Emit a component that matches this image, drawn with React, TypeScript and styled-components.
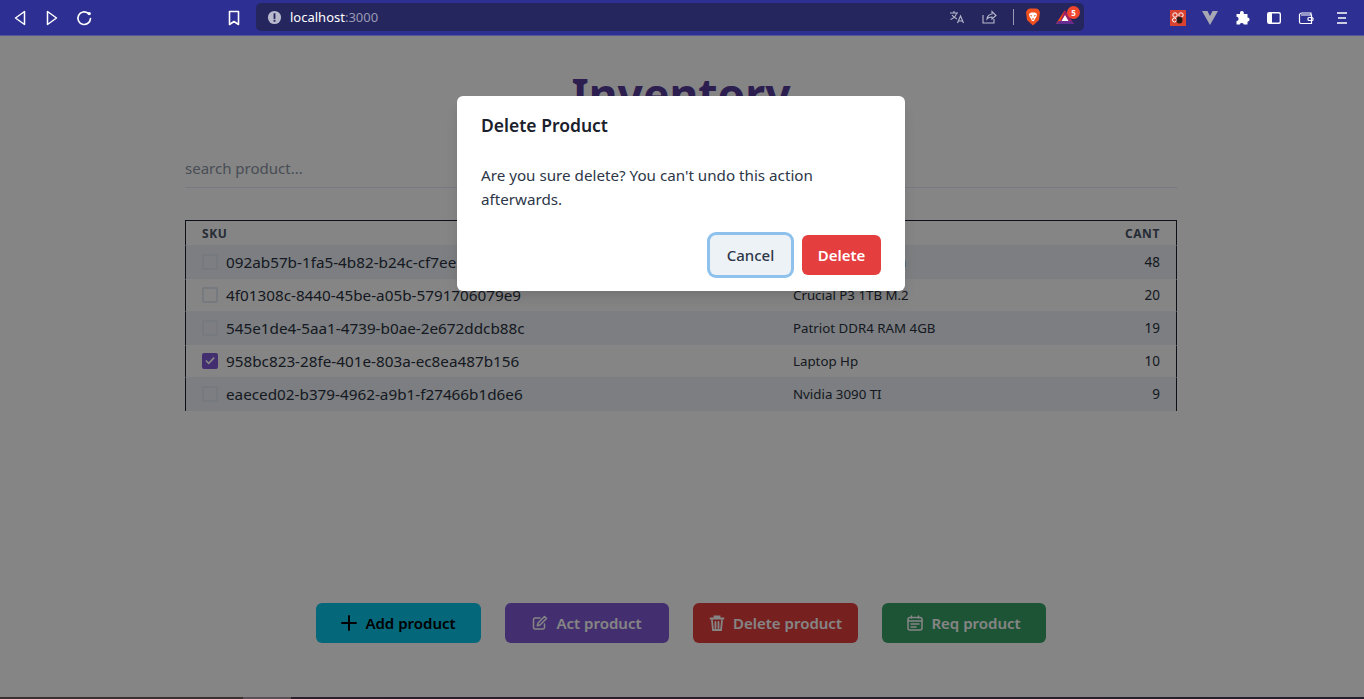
import React from "react";
import styled, { createGlobalStyle } from "styled-components";

const Global = createGlobalStyle`
  html, body { margin: 0; padding: 0; height: 100%; background: #fff; overflow: hidden; }
  * { box-sizing: border-box; }
  body { font-family: "Noto Sans", "Open Sans", sans-serif; color: #1a202c; }
`;

const Screen = styled.div`
  width: 1364px;
  height: 699px;
  display: flex;
  flex-direction: column;
  position: relative;
  overflow: hidden;
`;

const Toolbar = styled.header`
  flex: 0 0 36px;
  height: 36px;
  background: #2d2f92;
  border-bottom: 1px solid #55559a;
  display: flex;
  align-items: center;
  color: #fff;
`;

const NavGroup = styled.div`
  display: flex;
  align-items: center;
  gap: 16px;
  padding-left: 12px;
`;

const ToolIcon = styled.svg<{ $w?: number; $h?: number; $ml?: number }>`
  flex: none;
  width: ${(p) => p.$w ?? 16}px;
  height: ${(p) => p.$h ?? 16}px;
  margin-left: ${(p) => p.$ml ?? 0}px;
  display: block;
`;

const Bookmark = styled.div`
  margin-left: 134px;
  margin-right: 14px;
  display: flex;
`;

const UrlBar = styled.div`
  width: 828px;
  height: 28px;
  margin-top: -1px;
  background: #25265e;
  border-radius: 5px;
  display: flex;
  align-items: center;
  padding: 0 9px 0 11px;
  position: relative;
`;

const UrlText = styled.div`
  font-size: 13px;
  color: #fff;
  flex: 1;
  margin-left: 8px;
  white-space: nowrap;
`;

const UrlPort = styled.span`
  color: #9a9ab4;
`;

const Divider = styled.div`
  width: 1px;
  height: 16px;
  background: #9a9ab4;
  margin: 0 0 0 16px;
`;

const Badge = styled.span`
  position: absolute;
  right: 4px;
  top: 3px;
  width: 13px;
  height: 13px;
  border-radius: 50%;
  background: #f0462d;
  color: #fff;
  font-size: 8px;
  font-weight: 700;
  line-height: 13px;
  text-align: center;
`;

const Extensions = styled.div`
  display: flex;
  align-items: center;
  gap: 16px;
  margin-left: 86px;
`;

const Page = styled.main`
  flex: 1;
  display: flex;
  flex-direction: column;
  align-items: center;
  padding-right: 2px;
  background: #fff;
`;

const Title = styled.h1`
  margin: 29px 0 0;
  font-size: 44.4px;
  line-height: 58px;
  font-weight: 700;
  color: #553c9a;
`;

const Search = styled.input`
  width: 992px;
  height: 40px;
  margin-top: 25px;
  padding: 0;
  border: 0;
  border-bottom: 1px solid #e2e8f0;
  outline: 0;
  background: transparent;
  font: inherit;
  font-size: 15px;

  &::placeholder {
    color: #8b95a5;
    opacity: 1;
  }
`;

const Table = styled.section`
  width: 992px;
  margin-top: 32px;
  border-top: 1px solid #1a202c;
`;

const HeadRow = styled.div`
  display: grid;
  grid-template-columns: 590px 1fr 100px;
  align-items: center;
  height: 24px;
  padding: 0 16px;
  border-left: 1px solid #1a202c;
  border-right: 1px solid #1a202c;
`;

const HeadCell = styled.div<{ $right?: boolean }>`
  font-size: 12px;
  font-weight: 700;
  letter-spacing: 0.6px;
  text-transform: uppercase;
  color: #4a5568;
  text-align: ${(p) => (p.$right ? "right" : "left")};
`;

const Row = styled.div<{ $striped: boolean }>`
  display: grid;
  grid-template-columns: 590px 1fr 100px;
  align-items: center;
  height: ${(p) => (p.$striped ? 34 : 32)}px;
  padding: 0 16px 2px;
  background: ${(p) => (p.$striped ? "#edf2f7" : "transparent")};
  border-top: 1px solid transparent;
  border-left: 1px solid #1a202c;
  border-right: 1px solid #1a202c;
`;

const SkuCell = styled.div`
  display: flex;
  align-items: center;
  gap: 8px;
  font-size: 15.28px;
  color: #2a3140;
  white-space: nowrap;
`;

const Box = styled.span<{ $checked?: boolean }>`
  flex: none;
  width: 16px;
  height: 16px;
  border-radius: 2px;
  border: 2px solid ${(p) => (p.$checked ? "#805ad5" : "#e2e8f0")};
  background: ${(p) => (p.$checked ? "#805ad5" : "transparent")};
  display: flex;
  align-items: center;
  justify-content: center;
`;

const NameCell = styled.div`
  font-size: 13.3px;
  color: #2a3140;
  white-space: nowrap;
  padding-left: 1px;
`;

const QtyCell = styled.div`
  font-size: 13.5px;
  color: #2a3140;
  text-align: right;
`;

const Actions = styled.div`
  margin-top: auto;
  margin-bottom: 56px;
  display: flex;
  gap: 24px;
`;

const ActionButton = styled.button<{ $bg: string; $fg: string; $w: number }>`
  width: ${(p) => p.$w}px;
  height: 40px;
  border: 0;
  border-radius: 6px;
  background: ${(p) => p.$bg};
  color: ${(p) => p.$fg};
  font: inherit;
  font-size: 15px;
  font-weight: 600;
  display: flex;
  align-items: center;
  justify-content: center;
  gap: 8px;
`;

const Overlay = styled.div`
  position: absolute;
  inset: 36px 0 0 0;
  background: rgba(0, 0, 0, 0.48);
`;

const TaskStrip = styled.div`
  position: absolute;
  left: 0;
  right: 0;
  bottom: 0;
  height: 2px;
  background: linear-gradient(
    to right,
    #3b3030 0,
    #3b3030 243px,
    #5a4f55 243px,
    #5a4f55 291px,
    #2a1f2a 291px,
    #241e2c 100%
  );
`;

const Modal = styled.div`
  position: absolute;
  left: 457px;
  top: 96px;
  width: 448px;
  height: 195px;
  background: #fff;
  border-radius: 6px;
  box-shadow: 0 10px 15px -3px rgba(0, 0, 0, 0.1), 0 4px 6px -2px rgba(0, 0, 0, 0.05);
  display: flex;
  flex-direction: column;
`;

const ModalHeader = styled.h2`
  margin: 0;
  padding: 15px 24px 0;
  font-size: 17.5px;
  line-height: 28px;
  font-weight: 600;
`;

const ModalBody = styled.p`
  margin: 0;
  padding: 24px 24px 0;
  font-size: 15.2px;
  line-height: 24px;
  color: #2d3748;
`;

const ModalFooter = styled.div`
  margin-top: auto;
  padding: 0 24px 16px;
  display: flex;
  justify-content: flex-end;
  gap: 11px;
`;

const DialogButton = styled.button<{ $danger?: boolean }>`
  height: 40px;
  width: ${(p) => (p.$danger ? 79 : 81)}px;
  border: 0;
  border-radius: 6px;
  font: inherit;
  font-size: 15px;
  font-weight: ${(p) => (p.$danger ? 600 : 500)};
  background: ${(p) => (p.$danger ? "#e53e3e" : "#edf2f7")};
  color: ${(p) => (p.$danger ? "#fff" : "#2d3748")};
  box-shadow: ${(p) => (p.$danger ? "none" : "0 0 0 3px rgba(66, 153, 225, 0.6)")};
`;

const rows = [
  { sku: "092ab57b-1fa5-4b82-b24c-cf7ee3d1a9c4", name: "Disco SSD Toshiba", qty: 48 },
  { sku: "4f01308c-8440-45be-a05b-5791706079e9", name: "Crucial P3 1TB M.2", qty: 20 },
  { sku: "545e1de4-5aa1-4739-b0ae-2e672ddcb88c", name: "Patriot DDR4 RAM 4GB", qty: 19 },
  { sku: "958bc823-28fe-401e-803a-ec8ea487b156", name: "Laptop Hp", qty: 10, checked: true },
  { sku: "eaeced02-b379-4962-a9b1-f27466b1d6e6", name: "Nvidia 3090 TI", qty: 9 },
];

const Stroke = { fill: "none", stroke: "currentColor", strokeLinecap: "round", strokeLinejoin: "round" } as const;

export default function App() {
  return (
    <Screen>
      <Global />
      <Toolbar>
        <NavGroup>
          <ToolIcon viewBox="0 0 16 16" {...Stroke} strokeWidth={1.5}><path d="M12.5 1.500v13L3.500 8z" /></ToolIcon>
          <ToolIcon viewBox="0 0 16 16" {...Stroke} strokeWidth={1.5}><path d="M3.500 1.500v13l9-6.500z" /></ToolIcon>
          <ToolIcon viewBox="0 0 16 16" {...Stroke} strokeWidth={1.7}><path d="M14.500 8.500a6.300 6.300 0 1 1-2.300-5.200" /><circle cx="13.200" cy="3.600" r="1.700" fill="#fff" stroke="none" /></ToolIcon>
        </NavGroup>
        <Bookmark>
          <ToolIcon viewBox="0 0 16 16" fill="none" stroke="#fff" strokeWidth={1.6} strokeLinejoin="round"><path d="M3.500 1.500h9v13L8 11.500 3.500 14.500z" /></ToolIcon>
        </Bookmark>
        <UrlBar>
          <ToolIcon viewBox="0 0 16 16" $w={15} $h={15}>
            <circle cx="8" cy="8" r="7" fill="#b8b9cc" />
            <rect x="7" y="3.500" width="2" height="6" fill="#25265e" />
            <rect x="7" y="10.500" width="2" height="2" fill="#25265e" />
          </ToolIcon>
          <UrlText>localhost<UrlPort>:3000</UrlPort></UrlText>
          <ToolIcon viewBox="0 0 16 16" stroke="#b8b9cc" fill="none" strokeWidth={1.1}><path d="M1 4h8M5 2v2M7.500 4c-.5 3-3 5.500-6 6.500M3 6c1 2 3 3 5 4M8.500 14l3-7 3 7M9.700 12h3.800" /></ToolIcon>
          <ToolIcon viewBox="0 0 16 16" stroke="#b8b9cc" fill="none" strokeWidth={1.1} $ml={16}><path d="M2 6v8h11v-4M6 10c0-3 3-5 5-5V2.500L15 6.500 11 10V8c-2 0-4 .5-5 2z" /></ToolIcon>
          <Divider />
          <ToolIcon viewBox="0 0 16 18" $h={18} $ml={11}>
            <path d="M3 1l2-.5h6l2 .5 2 3-1 8-6 5.500L2 12 1 4z" fill="#f1501f" />
            <path d="M4 6l2-1.500h4L12 6l-.5 2.500L10 11l-1 2H7l-1-2-1.500-2.500z" fill="#fff" />
            <path d="M5.500 7.500l1.500.5M10.500 7.500L9 8M7 11h2" stroke="#f1501f" strokeWidth="1" />
          </ToolIcon>
          <ToolIcon viewBox="0 0 20 16" $w={20} $ml={14}>
            <path d="M10 1L1 15h18z" fill="#9e1f63" />
            <path d="M10 1L1 15l3 0z" fill="#ff5000" />
            <path d="M1 15h18l-2.500-3h-13z" fill="#662d91" />
            <path d="M10 6l-3.500 6h7z" fill="#fff" />
          </ToolIcon>
          <Badge>5</Badge>
        </UrlBar>
        <Extensions>
          <ToolIcon viewBox="0 0 16 16">
            <rect width="16" height="16" fill="#d8422e" />
            <circle cx="5" cy="5" r="2.200" fill="none" stroke="#fff" strokeWidth="1" />
            <circle cx="11" cy="5" r="2.200" fill="none" stroke="#fff" strokeWidth="1" />
            <circle cx="4.500" cy="10" r="2" fill="none" stroke="#fff" strokeWidth="1" />
            <ellipse cx="9.500" cy="10" rx="3" ry="3.500" fill="#2a1a1a" />
          </ToolIcon>
          <ToolIcon viewBox="0 0 16 16"><path d="M0 1h5.500L8 6l2.500-5H16L8 15z" fill="#a8a8b4" /></ToolIcon>
          <ToolIcon viewBox="0 0 16 16"><path d="M6 2.500a2 2 0 0 1 3.800 0L9.800 4h3.700v3.500a2.100 2.100 0 0 1 0 4.200v2.800H9.800a2.100 2.100 0 0 0-4 0H2.500V11a2.100 2.100 0 0 0 0-4.200V4H6z" fill="#fff" /></ToolIcon>
          <ToolIcon viewBox="0 0 16 16" fill="none" stroke="#fff" strokeWidth="1.400"><rect x="1.700" y="2.700" width="12.600" height="10.600" rx="1.500" /><rect x="2" y="3" width="4" height="10" fill="#fff" stroke="none" /></ToolIcon>
          <ToolIcon viewBox="0 0 16 16" fill="none" stroke="#fff" strokeWidth="1.200"><path d="M1.500 4.500C2 3 3 3 4 3h9v2M1.500 4.500V12a1.500 1.500 0 0 0 1.500 1.500h10.500V5H3" /><rect x="10" y="7.500" width="5" height="3" rx="1" /></ToolIcon>
          <ToolIcon viewBox="0 0 16 16" stroke="#fff" strokeWidth="1.500" $ml={4}><path d="M3 3h10M4 8h8M3 13h10" /></ToolIcon>
        </Extensions>
      </Toolbar>

      <Page>
        <Title>Inventory</Title>
        <Search placeholder="search product..." />
        <Table>
          <HeadRow>
            <HeadCell>SKU</HeadCell>
            <HeadCell>Product</HeadCell>
            <HeadCell $right>Cant</HeadCell>
          </HeadRow>
          {rows.map((r, i) => (
            <Row key={r.sku} $striped={i % 2 === 0}>
              <SkuCell>
                <Box $checked={r.checked}>
                  {r.checked && (
                    <svg viewBox="0 0 12 10" width="10" height="9" fill="none" stroke="#fff" strokeWidth="2"><path d="M1 5l3.500 3.500L11 1.500" /></svg>
                  )}
                </Box>
                {r.sku}
              </SkuCell>
              <NameCell>{r.name}</NameCell>
              <QtyCell>{r.qty}</QtyCell>
            </Row>
          ))}
        </Table>
        <Actions>
          <ActionButton $bg="#0bc5ea" $fg="#000" $w={165}>
            <ToolIcon viewBox="0 0 16 16" fill="none" stroke="currentColor" strokeWidth="2" strokeLinecap="round"><path d="M8 1v14M1 8h14" /></ToolIcon>
            Add product
          </ActionButton>
          <ActionButton $bg="#805ad5" $fg="#fff" $w={164}>
            <ToolIcon viewBox="0 0 16 16" fill="none" stroke="currentColor" strokeWidth="1.500" strokeLinecap="round" strokeLinejoin="round"><path d="M8 3H3a1.500 1.500 0 0 0-1.500 1.500v8A1.500 1.500 0 0 0 3 14h8a1.500 1.500 0 0 0 1.500-1.500V9" /><path d="M12.500 1.500l2 2L8 10l-2.700.700L6 8z" /></ToolIcon>
            Act product
          </ActionButton>
          <ActionButton $bg="#e53e3e" $fg="#fff" $w={165}>
            <ToolIcon viewBox="0 0 16 16" fill="none" stroke="currentColor" strokeWidth="1.800" strokeLinecap="round"><path d="M1.500 3.500h13M5.500 3V1.500h5V3M3 5.500l1 9.500h8l1-9.500M6.500 7v6M9.500 7v6" /></ToolIcon>
            Delete product
          </ActionButton>
          <ActionButton $bg="#38a169" $fg="#fff" $w={164}>
            <ToolIcon viewBox="0 0 16 16" fill="none" stroke="currentColor" strokeWidth="1.500" strokeLinecap="round"><rect x="1" y="2.500" width="14" height="12.500" rx="2" /><path d="M1 6h14M4.500 1v2M11.500 1v2M4 9h8M4 12h5" /></ToolIcon>
            Req product
          </ActionButton>
        </Actions>
      </Page>

      <Overlay />
      <TaskStrip />
      <Modal>
        <ModalHeader>Delete Product</ModalHeader>
        <ModalBody>Are you sure delete? You can't undo this action afterwards.</ModalBody>
        <ModalFooter>
          <DialogButton>Cancel</DialogButton>
          <DialogButton $danger>Delete</DialogButton>
        </ModalFooter>
      </Modal>
    </Screen>
  );
}
